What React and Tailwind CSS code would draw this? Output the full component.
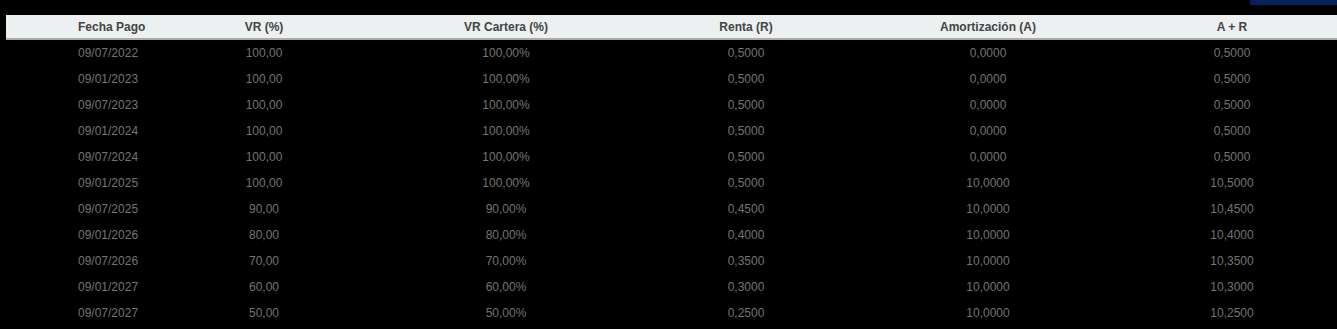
import React from "react";

const rows = [
  ["09/07/2022", "100,00", "100,00%", "0,5000", "0,0000", "0,5000"],
  ["09/01/2023", "100,00", "100,00%", "0,5000", "0,0000", "0,5000"],
  ["09/07/2023", "100,00", "100,00%", "0,5000", "0,0000", "0,5000"],
  ["09/01/2024", "100,00", "100,00%", "0,5000", "0,0000", "0,5000"],
  ["09/07/2024", "100,00", "100,00%", "0,5000", "0,0000", "0,5000"],
  ["09/01/2025", "100,00", "100,00%", "0,5000", "10,0000", "10,5000"],
  ["09/07/2025", "90,00", "90,00%", "0,4500", "10,0000", "10,4500"],
  ["09/01/2026", "80,00", "80,00%", "0,4000", "10,0000", "10,4000"],
  ["09/07/2026", "70,00", "70,00%", "0,3500", "10,0000", "10,3500"],
  ["09/01/2027", "60,00", "60,00%", "0,3000", "10,0000", "10,3000"],
  ["09/07/2027", "50,00", "50,00%", "0,2500", "10,0000", "10,2500"],
];

const headers = ["Fecha Pago", "VR (%)", "VR Cartera (%)", "Renta (R)", "Amortización (A)", "A + R"];
const widths = [
  "w-[210px] pl-[72px] text-left",
  "w-[96px] text-center",
  "w-[388px] text-center",
  "w-[92px] text-center",
  "w-[392px] text-center",
  "w-[96px] text-center",
];

export default function App() {
  return (
    <div className="h-[329px] w-full bg-black overflow-hidden" style={{ fontFamily: '"Liberation Sans", Arial, sans-serif' }}>
      <div className="flex h-[5px] justify-end">
        <div className="w-[87px] bg-[#06215e]" />
      </div>
      <div className="ml-[6px] mt-[10px]">
        <div className="flex h-[25px] items-center bg-[#ecf0f1] border-b-2 border-[#a9abab] text-[12px] font-bold text-[#444]">
          {headers.map((h, i) => (
            <div key={i} className={`${widths[i]} shrink-0`}>{h}</div>
          ))}
        </div>
        {rows.map((r, ri) => (
          <div key={ri} className="flex h-[26px] items-center text-[12px] text-[#747474]">
            {r.map((c, i) => (
              <div key={i} className={`${widths[i]} shrink-0`}>{c}</div>
            ))}
          </div>
        ))}
      </div>
    </div>
  );
}
